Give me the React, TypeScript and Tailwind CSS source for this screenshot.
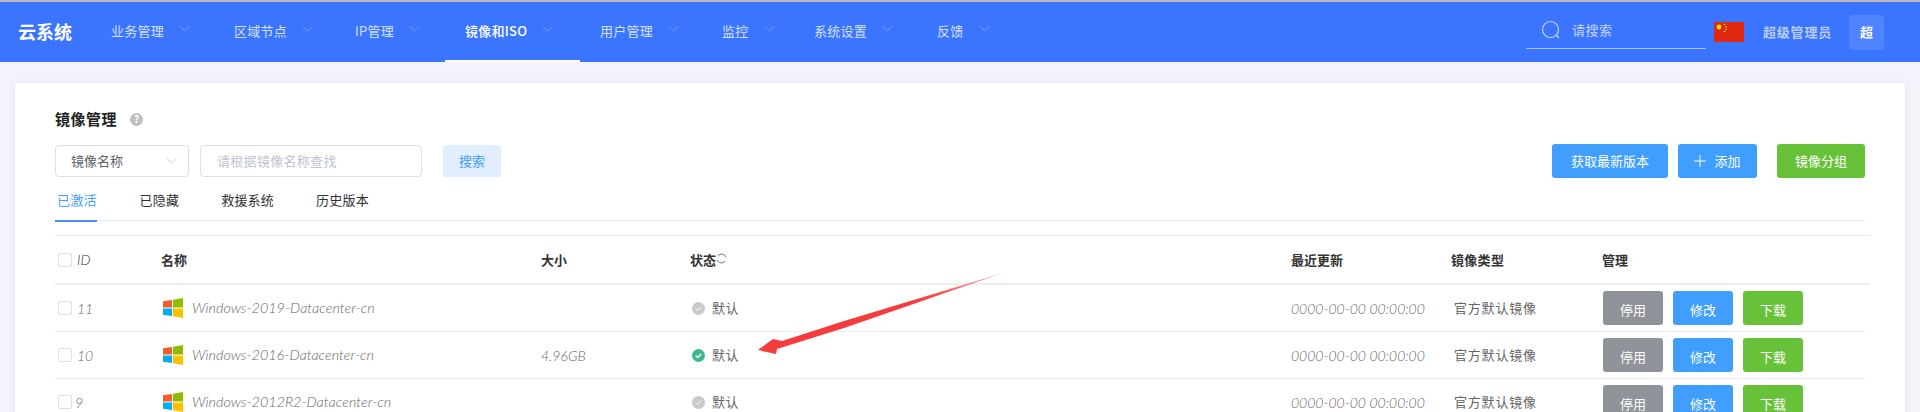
import React from "react";

const cjk = "font-['Noto_Sans_CJK_SC','Noto_Sans',sans-serif]";

function Chevron({ className = "" }: { className?: string }) {
  return (
    <svg viewBox="0 0 12 7" className={className} fill="none" stroke="currentColor" strokeWidth="0.8">
      <path d="M0.5 0.5 L6 6 L11.5 0.5" />
    </svg>
  );
}

function NavItem({ label, width, active }: { label: string; width: string; active?: boolean }) {
  return (
    <div className={`relative flex h-[60px] items-center pl-5 ${width} ${active ? "text-white font-medium" : "text-[#d3e0ff]"}`}>
      <span className="mb-[2px] text-[13px] tracking-[0.25px]">{label}</span>
      <Chevron className="ml-[15px] mb-[7px] h-[6px] w-[11px] text-[#8fb0ff]" />
      {active && <div className="absolute bottom-0 left-0 h-[2px] w-full bg-white" />}
    </div>
  );
}

function WinLogo() {
  return (
    <svg viewBox="0 0 20 20" className="h-5 w-5 shrink-0">
      <path d="M0 3.2 L9 2 V9.4 H0 Z" fill="#f25e2a" />
      <path d="M10 1.8 L20 0 V9.4 H10 Z" fill="#8fbc00" />
      <path d="M0 10.4 H9 V18 L0 16.8 Z" fill="#00adef" />
      <path d="M10 10.4 H20 V20 L10 18.2 Z" fill="#ffc000" />
    </svg>
  );
}

function Check() {
  return <span className="h-[14px] w-[14px] shrink-0 rounded-[2px] border border-[#dcdfe6] bg-white" />;
}

function Status({ on }: { on?: boolean }) {
  return (
    <span className={`flex h-[13px] w-[13px] items-center justify-center rounded-full ${on ? "bg-[#3cb88a]" : "bg-[#c9c9c9]"}`}>
      <svg viewBox="0 0 10 10" className="h-[9px] w-[9px]" fill="none" stroke="white" strokeWidth={on ? 1.5 : 1}>
        <path d="M2 5.2 L4.2 7.2 L8 3" />
      </svg>
    </span>
  );
}

function ActionBtn({ label, color }: { label: string; color: string }) {
  return (
    <button className={`flex h-[34px] w-[60px] items-center justify-center rounded-[3px] pt-[3px] text-[13px] text-white ${color}`}>
      {label}
    </button>
  );
}

const gridCols = "grid grid-cols-[106px_380px_149px_601px_160px_151px_263px] items-center";

const rows = [
  { id: "11", name: "Windows-2019-Datacenter-cn", size: "", on: false, idx: "ml-[5px]" },
  { id: "10", name: "Windows-2016-Datacenter-cn", size: "4.96GB", on: true, idx: "ml-[5px]" },
  { id: "9", name: "Windows-2012R2-Datacenter-cn", size: "", on: false, idx: "ml-[3px]" },
];

function Row({ r }: { r: (typeof rows)[number] }) {
  return (
    <div className={`${gridCols} h-[47px] border-b border-[#ebeef5] text-[13px] text-[#666]`}>
      <div className="flex items-center pl-[3px]">
        <Check />
        <span className={`${r.idx} font-['Lato',sans-serif] text-[14px] italic font-light`}>{r.id}</span>
      </div>
      <div className="flex items-center pl-[2px]">
        <WinLogo />
        <span className="ml-[9px] font-['Lato',sans-serif] text-[14.4px] italic font-light">{r.name}</span>
      </div>
      <div className="font-['Lato',sans-serif] text-[14px] italic font-light">{r.size}</div>
      <div className="flex items-center pl-[2px]">
        <Status on={r.on} />
        <span className="ml-[7px] tracking-[0.4px]">默认</span>
      </div>
      <div className="font-['Lato',sans-serif] text-[14px] italic font-light">0000-00-00 00:00:00</div>
      <div className="pl-[3px] tracking-[0.8px]">官方默认镜像</div>
      <div className="flex gap-[10px] pl-[1px]">
        <ActionBtn label="停用" color="bg-[#909399]" />
        <ActionBtn label="修改" color="bg-[#409eff]" />
        <ActionBtn label="下载" color="bg-[#67c23a]" />
      </div>
    </div>
  );
}

export default function App() {
  return (
    <div className={`relative h-[412px] w-[1920px] overflow-hidden bg-[#f3f4fb] ${cjk}`}>
      <div className="h-[2px] bg-[#b8b8b8]" />
      <header className="flex h-[60px] items-center bg-[#3b75ff]">
        <div className="mb-[2px] w-[91px] pl-[18px] text-[18px] font-bold leading-none text-white">云系统</div>
        <NavItem label="业务管理" width="w-[123px]" />
        <NavItem label="区域节点" width="w-[121px]" />
        <NavItem label="IP管理" width="w-[110px]" />
        <NavItem label="镜像和ISO" width="w-[135px]" active />
        <NavItem label="用户管理" width="w-[122px]" />
        <NavItem label="监控" width="w-[92px]" />
        <NavItem label="系统设置" width="w-[123px]" />
        <NavItem label="反馈" width="w-[90px]" />
        <div className="ml-auto flex items-center pr-[36px]">
          <div className="mt-[-3px] flex h-[36px] w-[180px] items-center border-b border-[#a9c2ff] pl-[15px] text-[#c5d6ff]">
            <svg viewBox="0 0 20 20" className="h-5 w-5" fill="none" stroke="currentColor" strokeWidth="1.2">
              <circle cx="9.5" cy="9.5" r="8" />
              <path d="M15.2 15.2 L18 18" />
            </svg>
            <span className="ml-[11px] text-[13px] tracking-[0.5px]">请搜索</span>
          </div>
          <svg viewBox="0 0 30 20" className="ml-[8px] h-[20px] w-[30px]">
            <rect width="30" height="20" fill="#de2910" />
            <circle cx="5" cy="5" r="2.4" fill="#ffde00" />
            <circle cx="10.5" cy="2.5" r="0.8" fill="#ffde00" />
            <circle cx="12" cy="5" r="0.8" fill="#ffde00" />
            <circle cx="12" cy="7.5" r="0.8" fill="#ffde00" />
            <circle cx="10.5" cy="9.5" r="0.8" fill="#ffde00" />
          </svg>
          <span className="ml-[19px] text-[13px] font-bold tracking-[0.8px] text-[#b9ccff]">超级管理员</span>
          <div className="ml-[17px] flex h-[35px] w-[35px] items-center justify-center rounded-[4px] bg-white/10 text-[13px] font-bold text-white">
            超
          </div>
        </div>
      </header>

      <main className="mx-[15px] mt-[21px] h-[400px] rounded-[3px] bg-white px-[40px] pt-[24px] shadow-[0_0_6px_rgba(0,0,0,0.06)]">
        <div className="flex h-[24px] items-center">
          <h1 className="text-[15px] font-bold tracking-[0.5px] text-[#222]">镜像管理</h1>
          <span className="ml-[13px] flex h-[13px] w-[13px] items-center justify-center rounded-full bg-[#c0c0c0] text-[10px] font-bold leading-none text-white">?</span>
        </div>

        <div className="mt-[13px] flex h-[34px] items-center">
          <div className="flex h-[32px] w-[134px] items-center justify-between rounded-[4px] border border-[#dcdfe6] pl-[15px] pr-[11px] text-[13px] text-[#606266]">
            <span>镜像名称</span>
            <Chevron className="h-[6px] w-[11px] text-[#b8bcc4]" />
          </div>
          <div className="ml-[11px] flex h-[32px] w-[222px] items-center rounded-[4px] border border-[#dcdfe6] pl-[16px] text-[13px] tracking-[0.3px] text-[#c0c4cc]">
            请根据镜像名称查找
          </div>
          <button className="ml-[21px] flex h-[32px] w-[58px] items-center justify-center rounded-[3px] bg-[#e0eefe] text-[13px] text-[#409eff]">搜索</button>
          <button className="ml-auto flex h-[34px] w-[116px] items-center justify-center rounded-[3px] bg-[#409eff] text-[13px] text-white">获取最新版本</button>
          <button className="ml-[10px] flex h-[34px] w-[79px] items-center justify-center rounded-[3px] bg-[#409eff] text-[13px] text-white">
            <svg viewBox="0 0 12 12" className="mr-[8px] h-3 w-3" fill="none" stroke="white" strokeWidth="1">
              <path d="M6 0 V12 M0 6 H12" />
            </svg>
            添加
          </button>
          <button className="ml-[20px] flex h-[34px] w-[88px] items-center justify-center rounded-[3px] bg-[#67c23a] text-[13px] text-white">镜像分组</button>
        </div>

        <nav className="flex h-[43px] items-center border-b border-[#e4e7ed] pt-[1px] text-[13px] tracking-[0.2px] text-[#303133]">
          <span className="relative ml-[2px] text-[#409eff]">
            已激活
            <span className="absolute bottom-[-13px] left-[-2px] h-[2px] w-[42px] bg-[#4a90e2]" />
          </span>
          <span className="ml-[43px]">已隐藏</span>
          <span className="ml-[42px]">救援系统</span>
          <span className="ml-[42px]">历史版本</span>
        </nav>

        <section className="mt-[14px]">
          <div className={`${gridCols} mr-[-5px] h-[50px] border-t border-b-2 border-t-[#ebeef5] border-b-[#eeeeee] text-[13px] font-bold text-[#333]`}>
            <div className="flex items-center pl-[3px]">
              <Check />
              <span className="ml-[5px] font-['Lato',sans-serif] text-[14px] font-light italic">ID</span>
            </div>
            <div>名称</div>
            <div>大小</div>
            <div className="flex items-center">
              状态
              <svg viewBox="0 0 12 12" className="mb-[3px] h-[11px] w-[11px]" fill="none" stroke="#555" strokeWidth="0.9">
                <path d="M2 3.2 A5 5 0 0 1 10.8 4.5 M10 8.8 A5 5 0 0 1 1.2 7.5" />
              </svg>
            </div>
            <div>最近更新</div>
            <div className="tracking-[0.3px]">镜像类型</div>
            <div>管理</div>
          </div>
          {rows.map((r) => (
            <Row key={r.id} r={r} />
          ))}
        </section>
      </main>

      <svg viewBox="0 0 1920 412" className="pointer-events-none absolute left-0 top-0 h-[412px] w-[1920px]">
        <defs>
          <linearGradient id="arrowFade" x1="1003" y1="273" x2="920" y2="302" gradientUnits="userSpaceOnUse">
            <stop offset="0" stopColor="#f9a8a8" />
            <stop offset="1" stopColor="#f53c3c" />
          </linearGradient>
        </defs>
        <polygon points="1003,273 844,321 782,341 773,339 758,350 776,354 777,349 844,328" fill="url(#arrowFade)" />
      </svg>
    </div>
  );
}
